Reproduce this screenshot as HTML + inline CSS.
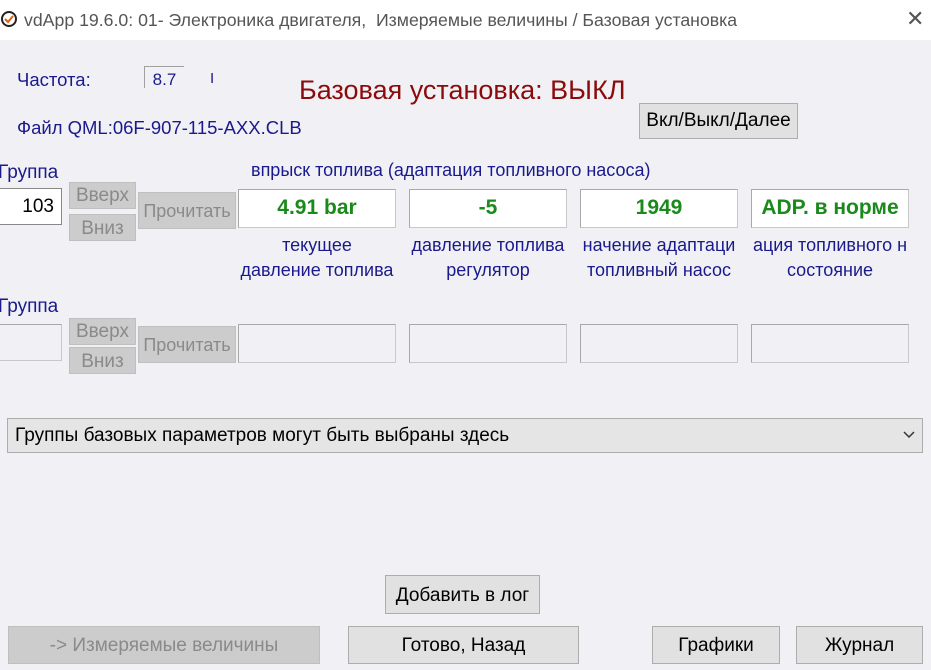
<!DOCTYPE html>
<html><head><meta charset="utf-8"><style>
*{margin:0;padding:0;box-sizing:border-box}
body{width:931px;height:670px;background:#f0f0f5;font-family:"Liberation Sans",sans-serif;position:relative;overflow:hidden}
.a{position:absolute;white-space:nowrap}
.btn{position:absolute;background:#e1e1e1;border:1px solid #adadad;text-align:center;font-size:19px;color:#000;white-space:nowrap;overflow:hidden}
.dis{background:#cccccc;border:1px solid #bfbfbf;color:#8a8a8a}
.box{position:absolute;background:#fff;border:1px solid #c8c8c8;border-top-color:#a8a8a8;border-left-color:#a8a8a8;color:#1a8a1a;font-weight:bold;font-size:21px;text-align:center;line-height:36px;white-space:nowrap;overflow:hidden}
.ebox{position:absolute;background:#f0f0f5;border:1px solid #c8c8c8;border-top-color:#a8a8a8;border-left-color:#a8a8a8}
.lbl{position:absolute;color:#1a1a8c;font-size:18px;text-align:center;line-height:25px;white-space:nowrap}
</style></head><body>
<div class="a" style="left:0;top:0;width:931px;height:40px;background:#fff"></div>
<svg class="a" style="left:0;top:9px" width="20" height="22"><circle cx="9" cy="10" r="7" fill="none" stroke="#222" stroke-width="2"/><path d="M5 10l3 3 5-6" stroke="#e06010" stroke-width="2" fill="none"/></svg>
<div class="a" style="left:24px;top:10px;font-size:17.7px;color:#555">vdApp 19.6.0: 01- Электроника двигателя,&nbsp; Измеряемые величины / Базовая установка</div>
<div class="a" style="left:906px;top:6px;font-size:22px;color:#555">✕</div>

<div class="a" style="left:17px;top:69px;font-size:18.5px;color:#1a1a8c">Частота:</div>
<div class="a" style="left:144px;top:66px;width:40px;height:22px;border-top:1px solid #a0a0a0;border-left:1px solid #a0a0a0;font-size:17px;color:#1a1a8c;text-align:center;line-height:26px">8.7</div>
<div class="a" style="left:210px;top:70px;font-size:15px;color:#1a1a8c">I</div>
<div class="a" style="left:299px;top:75px;font-size:27px;color:#8b0a0a">Базовая установка: ВЫКЛ</div>
<div class="a" style="left:17px;top:117px;font-size:18.5px;color:#1a1a8c">Файл QML:06F-907-115-AXX.CLB</div>
<div class="btn" style="left:639px;top:103px;width:159px;height:36px;line-height:34px">Вкл/Выкл/Далее</div>

<div class="a" style="left:-2px;top:162px;font-size:19px;color:#1a1a8c">Группа</div>
<div class="a" style="left:-2px;top:188px;width:64px;height:37px;background:#fff;border:1px solid #888;font-size:19px;text-align:right;padding-right:7px;line-height:35px">103</div>
<div class="btn dis" style="left:69px;top:182px;width:67px;height:27px;line-height:25px">Вверх</div>
<div class="btn dis" style="left:69px;top:214px;width:67px;height:27px;line-height:27px">Вниз</div>
<div class="btn dis" style="left:138px;top:192px;width:98px;height:37px;line-height:37px;font-size:18px">Прочитать</div>
<div class="lbl" style="left:251px;top:158px;text-align:left">впрыск топлива (адаптация топливного насоса)</div>
<div class="box" style="left:238px;top:189px;width:158px;height:39px">4.91 bar</div>
<div class="box" style="left:409px;top:189px;width:158px;height:39px">-5</div>
<div class="box" style="left:580px;top:189px;width:158px;height:39px">1949</div>
<div class="box" style="left:751px;top:189px;width:158px;height:39px">ADP. в норме</div>
<div class="lbl" style="left:230px;top:233px;width:174px">текущее<br>давление топлива</div>
<div class="lbl" style="left:401px;top:233px;width:174px">давление топлива<br>регулятор</div>
<div class="lbl" style="left:572px;top:233px;width:174px">начение адаптаци<br>топливный насос</div>
<div class="lbl" style="left:743px;top:233px;width:174px">ация топливного н<br>состояние</div>

<div class="a" style="left:-2px;top:296px;font-size:19px;color:#1a1a8c">Группа</div>
<div class="ebox" style="left:-2px;top:324px;width:64px;height:37px"></div>
<div class="btn dis" style="left:69px;top:318px;width:67px;height:27px;line-height:25px">Вверх</div>
<div class="btn dis" style="left:69px;top:347px;width:67px;height:27px;line-height:27px">Вниз</div>
<div class="btn dis" style="left:138px;top:326px;width:98px;height:37px;line-height:37px;font-size:18px">Прочитать</div>
<div class="ebox" style="left:238px;top:324px;width:158px;height:39px"></div>
<div class="ebox" style="left:409px;top:324px;width:158px;height:39px"></div>
<div class="ebox" style="left:580px;top:324px;width:158px;height:39px"></div>
<div class="ebox" style="left:751px;top:324px;width:158px;height:39px"></div>

<div class="a" style="left:7px;top:418px;width:916px;height:35px;background:#e5e5e5;border:1px solid #adadad;font-size:19px;line-height:33px;padding-left:7px;color:#000">Группы базовых параметров могут быть выбраны здесь</div>
<svg class="a" style="left:903px;top:431px" width="12" height="8"><path d="M1 1l5 5 5-5" stroke="#333" stroke-width="1.5" fill="none"/></svg>

<div class="btn" style="left:385px;top:575px;width:155px;height:39px;line-height:39px">Добавить в лог</div>
<div class="btn dis" style="left:8px;top:626px;width:312px;height:38px;line-height:38px">-&gt; Измеряемые величины</div>
<div class="btn" style="left:348px;top:626px;width:231px;height:38px;line-height:38px">Готово, Назад</div>
<div class="btn" style="left:652px;top:626px;width:128px;height:38px;line-height:38px">Графики</div>
<div class="btn" style="left:796px;top:626px;width:127px;height:38px;line-height:38px">Журнал</div>
</body></html>
